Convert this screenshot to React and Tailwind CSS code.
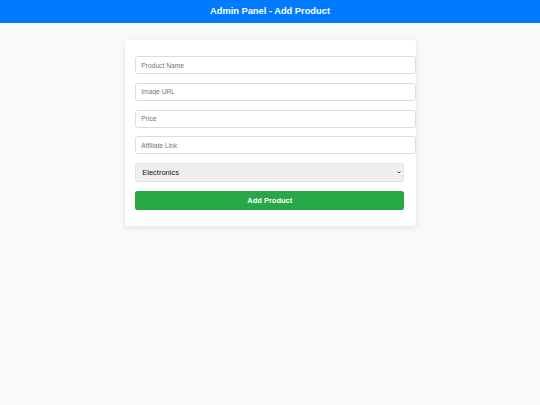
import { useState } from "react";

const fields = [
  { name: "name", placeholder: "Product Name" },
  { name: "image", placeholder: "Image URL" },
  { name: "price", placeholder: "Price" },
  { name: "link", placeholder: "Affiliate Link" },
];

const categories = ["Electronics", "Fashion", "Home", "Books"];

const App = () => {
  const [form, setForm] = useState({
    name: "",
    image: "",
    price: "",
    link: "",
    category: "Electronics",
  });

  const update = (key) => (e) => setForm({ ...form, [key]: e.target.value });

  return (
    <div className="min-h-[405px] bg-[#f8f9fa] font-['Liberation_Sans',Arial,sans-serif]">
      <header className="flex h-[23px] items-center justify-center bg-[#007bff] text-[9.3px] font-bold text-white">
        Admin Panel - Add Product
      </header>

      <main className="pt-[17px]">
        <form
          onSubmit={(e) => e.preventDefault()}
          className="mx-auto flex w-[291px] flex-col gap-[8.8px] rounded-[3px] bg-white pl-[10.75px] pr-[11.25px] pt-[16px] pb-[15.5px] shadow-[0_1px_6px_rgba(0,0,0,0.1)]"
        >
          {fields.map((f) => (
            <input
              key={f.name}
              type="text"
              value={form[f.name]}
              onChange={update(f.name)}
              placeholder={f.placeholder}
              className="box-content block h-[16px] w-full rounded-[2.5px] border border-[#dcdcdc] bg-white px-[5px] text-[6.7px] text-[#333] placeholder:text-[#777] focus:outline-none"
            />
          ))}

          <div className="relative h-[19px]">
            <select
              value={form.category}
              onChange={update("category")}
              className="block h-[19px] w-full appearance-none rounded-[2.5px] border border-[#e2e2e2] bg-[#efefef] px-[6px] text-[7.5px] font-normal leading-[17px] text-[#111] focus:outline-none"
            >
              {categories.map((c) => (
                <option key={c}>{c}</option>
              ))}
            </select>
            <svg
              viewBox="0 0 8 6"
              className="pointer-events-none absolute right-[3px] top-[8px] h-[3px] w-[4px]"
            >
              <path d="M1 1l3 3 3-3" fill="none" stroke="#333" strokeWidth="1.8" />
            </svg>
          </div>

          <button
            type="submit"
            className="block h-[19.3px] w-full rounded-[2.5px] bg-[#28a745] text-[7.5px] font-bold text-white"
          >
            Add Product
          </button>
        </form>
      </main>
    </div>
  );
};

export default App;
